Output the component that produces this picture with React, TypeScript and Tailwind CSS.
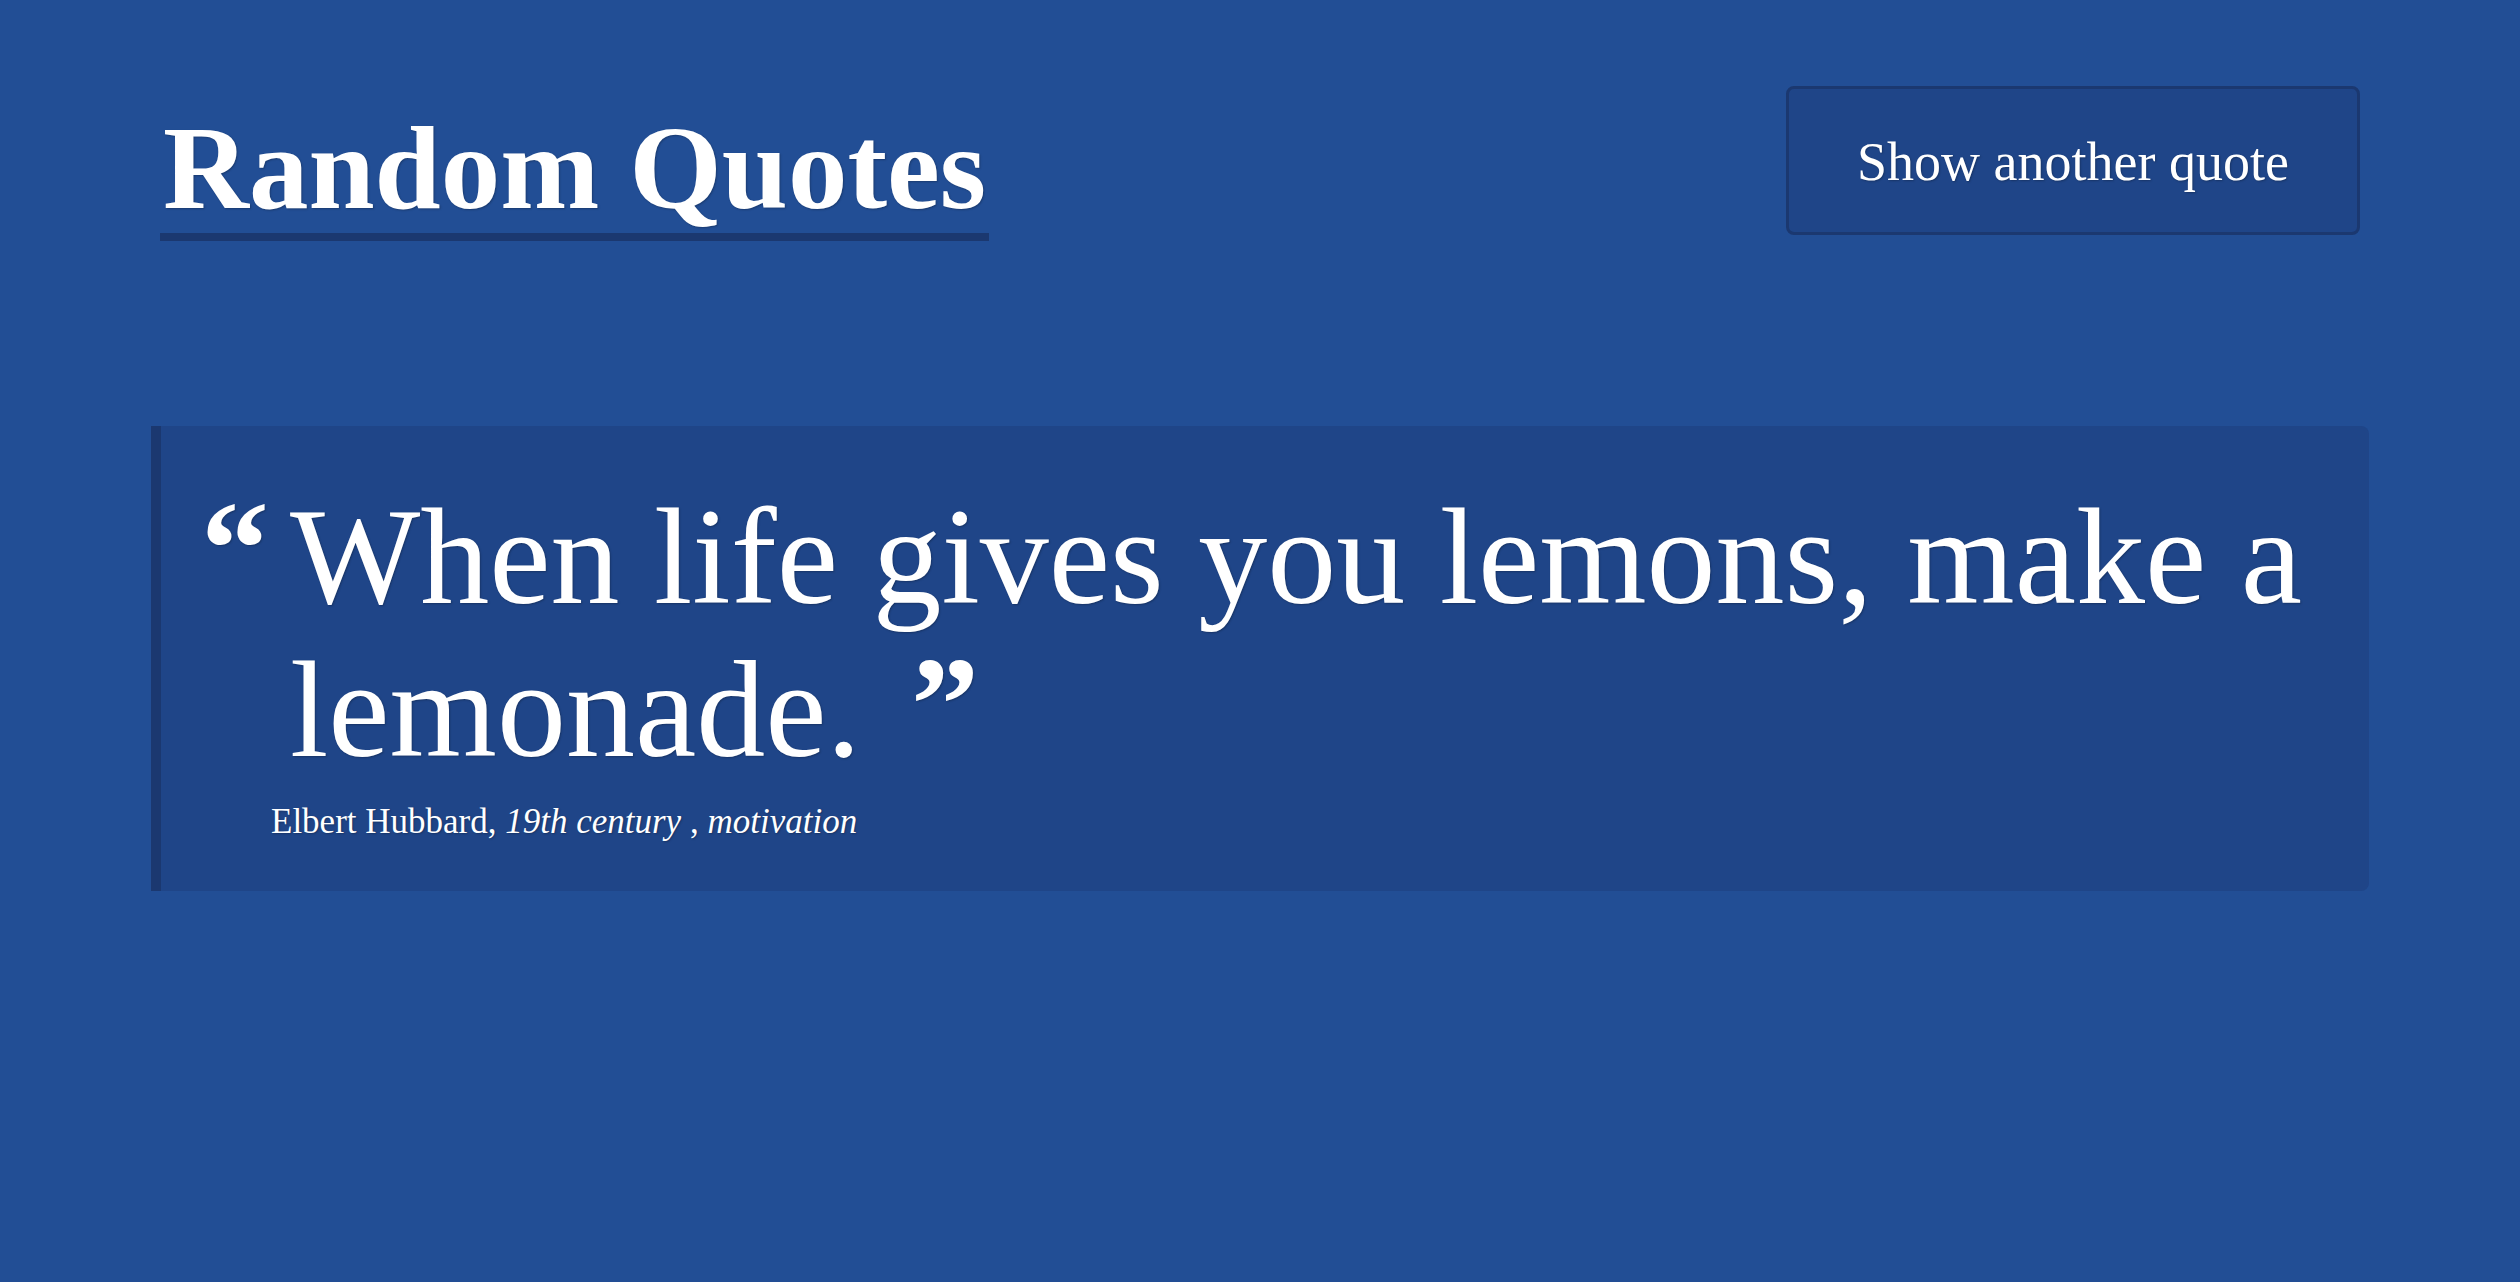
import React, { useState } from 'react';

const quotes = [
  {
    text: 'When life gives you lemons, make a lemonade.',
    author: 'Elbert Hubbard',
    era: '19th century',
    tag: 'motivation',
  },
];

const serif = "font-['Liberation_Serif','Times_New_Roman',serif]";
const shadow = '[text-shadow:1px_1px_2px_rgba(0,0,0,0.25)]';

export default function App() {
  const [idx, setIdx] = useState(0);
  const quote = quotes[idx];

  // split off the last word so the closing mark sits after it
  const words = quote.text.split(' ');
  const lastWord = words.pop();

  return (
    <div className={`min-h-[1282px] w-full bg-[#224e95] text-white ${serif}`}>
      <div className="mx-auto w-[2218px]">
        <header className="flex items-start justify-between px-[9px] pt-[86px]">
          <h1
            className={`mt-[23px] inline-block border-b-8 border-[#1b3870] px-[3px] pb-[5px] text-[119px] font-bold leading-none ${shadow}`}
          >
            Random Quotes
          </h1>
          <button
            onClick={() => setIdx((idx + 1) % quotes.length)}
            className={`flex h-[149px] w-[574px] items-center justify-center rounded-lg border-3 border-[#1b3870] bg-[#1f4588] pt-[4px] text-[54px] ${shadow}`}
          >
            Show another quote
          </button>
        </header>

        <blockquote className="mt-[185px] rounded-r-lg border-l-10 border-[#1b3870] bg-[#1f4588] pt-[54px] pb-[43px]">
          <div className="flex items-start pl-[40px] pr-[30px]">
            <span className={`w-[66px] shrink-0 text-[136px] font-bold leading-none ${shadow}`}>
              “
            </span>
            <p className={`ml-[23px] text-[138px] leading-[153px] ${shadow}`}>
              {words.join(' ')} {lastWord}
              <span className="ml-[50px] align-[6px] text-[136px] font-bold leading-none">”</span>
            </p>
          </div>
          <footer className={`mt-[9px] pl-[110px] text-[35px] leading-[53px] ${shadow}`}>
            {quote.author}, <i>{quote.era}</i> , <i>{quote.tag}</i>
          </footer>
        </blockquote>
      </div>
    </div>
  );
}
